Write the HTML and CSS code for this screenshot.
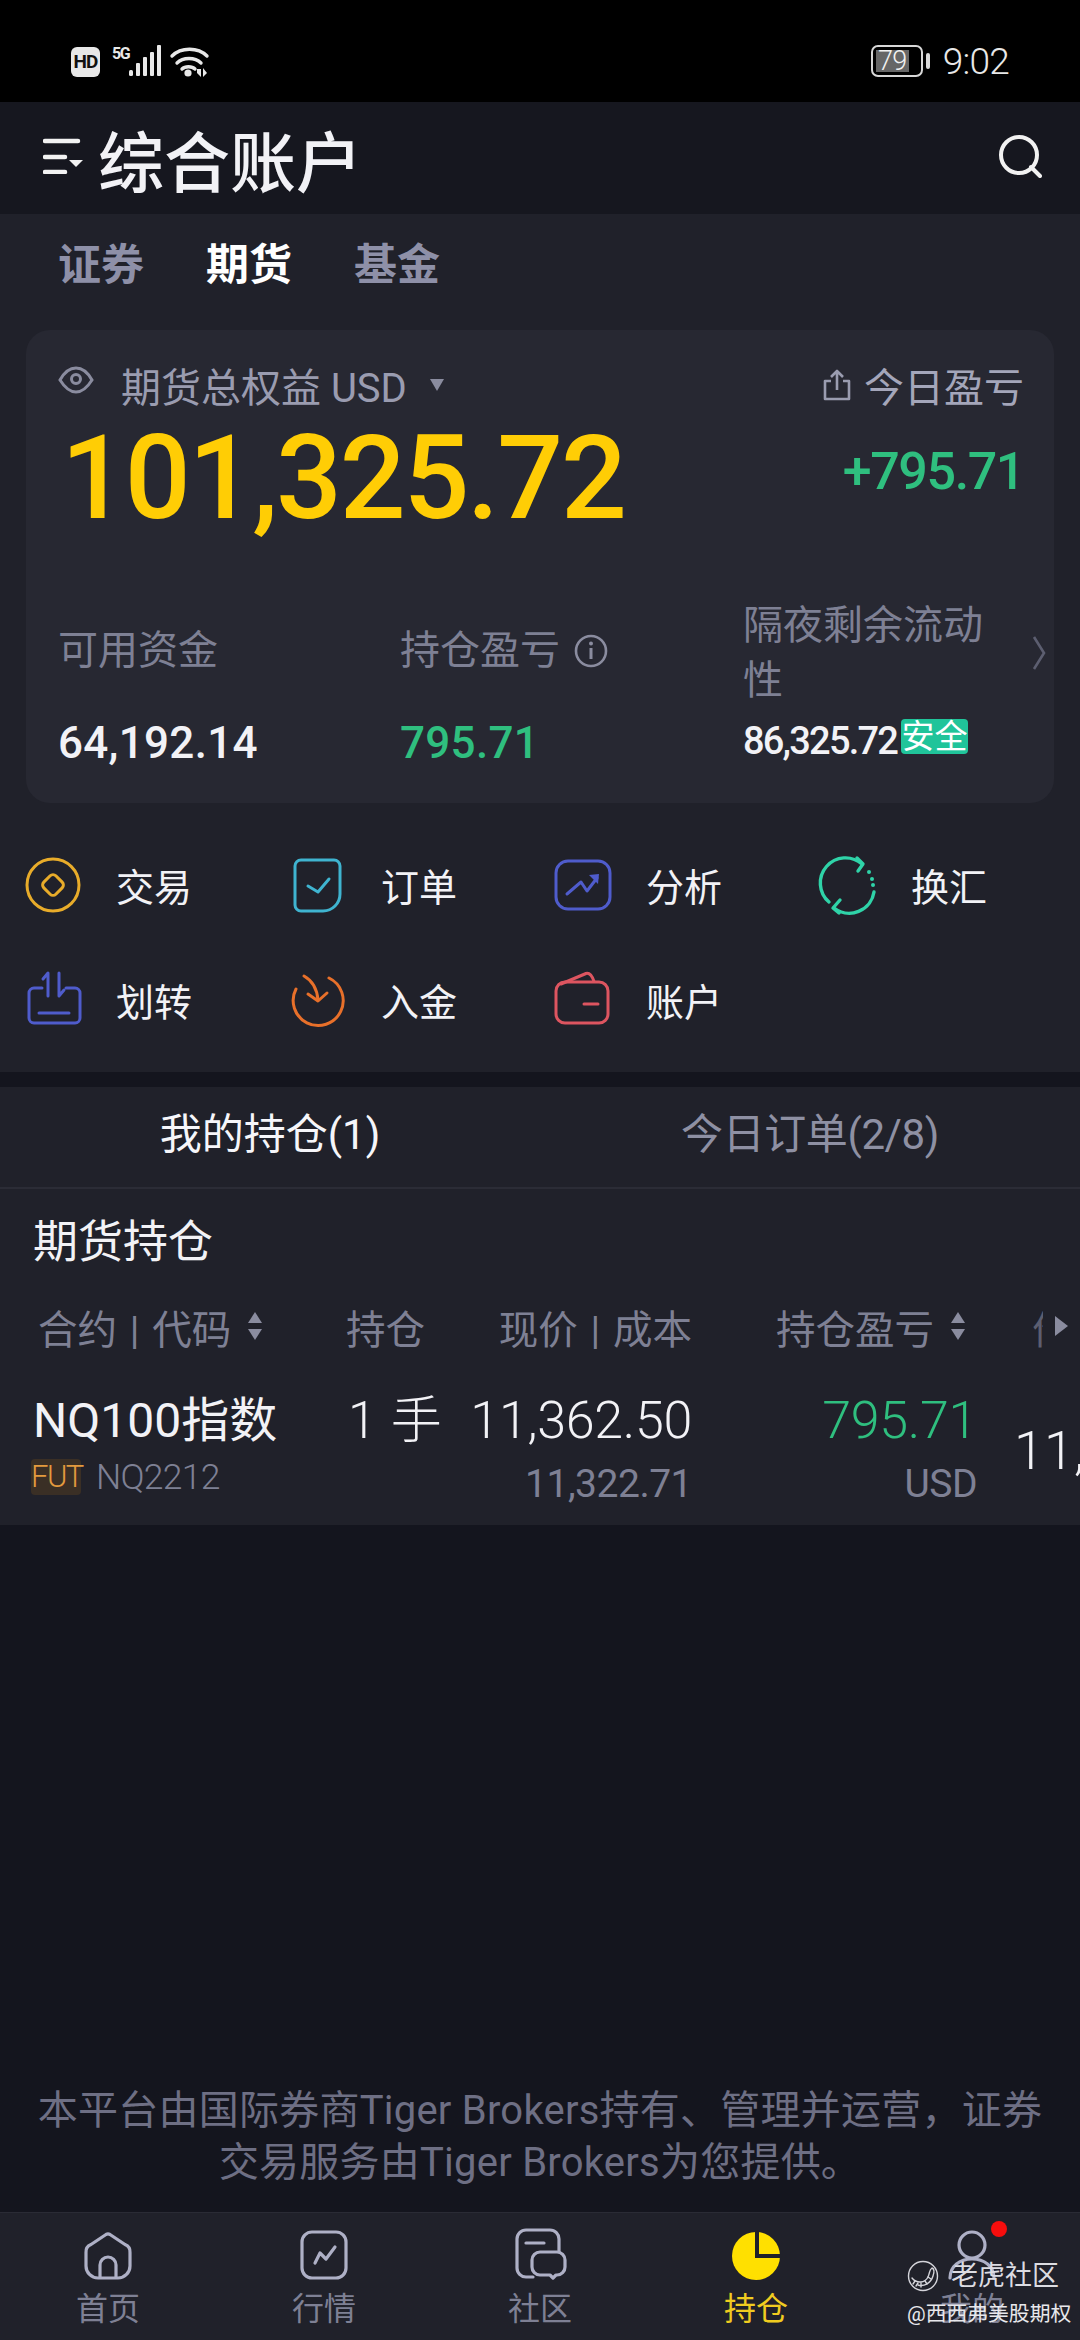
FILE: index.html
```html
<!DOCTYPE html>
<html lang="zh">
  <head>
    <title>综合账户</title>
    <meta name="viewport" content="width=device-width, initial-scale=1.0" />
    <link rel="stylesheet" href="styles.css">
  </head>
  <body>
    <div class="status-bar">
      <span class="hd-badge">HD</span>
      <span class="net-label">5G</span>
      <svg class="net-icons" width="84" height="34" viewBox="127 44 84 34">
        <g fill="#e8e8e8">
          <rect x="129" y="70" width="4" height="6" rx="1.5"/>
          <rect x="136" y="63" width="4" height="13" rx="1"/>
          <rect x="143" y="57" width="4" height="19" rx="1"/>
          <rect x="150" y="52" width="4" height="24" rx="1"/>
          <rect x="157" y="45" width="4" height="31" rx="1"/>
          <circle cx="188" cy="73" r="3.6"/>
          <path d="M197 69l4-0v8l-4-4zM203 68l4 5-4 4z"/>
        </g>
        <g fill="none" stroke="#e8e8e8" stroke-width="3.4" stroke-linecap="round">
          <path d="M172 56c9-9 26-9 35 0"/>
          <path d="M177 63c6-6 18-6 24 0"/>
          <path d="M182 69c3-3 10-3 13 0"/>
        </g>
      </svg>
      <div class="status-right">
        <div class="battery"><span class="battery-level">79</span></div>
        <span class="battery-cap"></span>
        <span class="clock">9:02</span>
      </div>
    </div>

    <header class="app-header">
      <svg class="menu-icon" width="42" height="36" viewBox="0 0 42 36">
        <path d="M2 3h33M2 19h20M2 34h20" stroke="#f2f2f2" stroke-width="4.5" stroke-linecap="round" fill="none"/>
        <path d="M26 22h14l-7 7z" fill="#f2f2f2"/>
      </svg>
      <h1 class="app-title">综合账户</h1>
      <svg class="search-icon" width="44" height="44" viewBox="0 0 44 44">
        <circle cx="21" cy="21" r="18" fill="none" stroke="#f2f2f2" stroke-width="4"/>
        <path d="M33 33l9 9" stroke="#f2f2f2" stroke-width="4" stroke-linecap="round"/>
      </svg>
    </header>

    <section class="overview">
      <nav class="asset-tabs">
        <span>证券</span>
        <span class="active">期货</span>
        <span>基金</span>
      </nav>

      <div class="card">
        <div class="card-top">
          <div>
            <div class="equity-label">
              <svg class="eye-icon" width="36" height="28" viewBox="0 0 36 28">
                <path d="M2 14C7 5 12 2 18 2s11 3 16 12c-5 8-10 12-16 12S7 22 2 14z" fill="none" stroke="#8a8c9f" stroke-width="3"/>
                <circle cx="18" cy="13" r="4.5" fill="none" stroke="#8a8c9f" stroke-width="3"/>
              </svg>
              <span>期货总权益 USD</span>
              <span class="caret"></span>
            </div>
            <div class="equity-value">101,325.72</div>
          </div>
          <div class="pnl-today">
            <div class="pnl-label">
              <svg width="30" height="32" viewBox="0 0 30 32">
                <path d="M9 12H3v18h24V12h-6M15 21V3M9 8l6-6 6 6" fill="none" stroke="#9a9cb0" stroke-width="2.6" stroke-linejoin="round"/>
              </svg>
              <span>今日盈亏</span>
            </div>
            <div class="pnl-value">+795.71</div>
          </div>
        </div>

        <div class="stats">
          <div class="stat-label stat-short">可用资金</div>
          <div class="stat-label stat-short">持仓盈亏
            <svg class="info-icon" width="34" height="34" viewBox="0 0 34 34">
              <circle cx="17" cy="17" r="15" fill="none" stroke="#8a8c9f" stroke-width="2.6"/>
              <path d="M17 14v11" stroke="#8a8c9f" stroke-width="3"/>
              <circle cx="17" cy="9.5" r="2" fill="#8a8c9f"/>
            </svg>
          </div>
          <div class="stat-label stat-wrap">
            <span class="stat-long">隔夜剩余流动性</span>
            <svg width="14" height="36" viewBox="0 0 14 36">
              <path d="M2 2l10 16L2 34" fill="none" stroke="#5c5e70" stroke-width="2.6"/>
            </svg>
          </div>
          <div class="stat-value">64,192.14</div>
          <div class="stat-value green">795.71</div>
          <div class="stat-value stat-small">86,325.72<span class="safe-badge">安全</span></div>
        </div>
      </div>

      <div class="actions">
        <div class="action">
          <svg viewBox="0 0 56 56"><g fill="none" stroke="#e8ac2a" stroke-width="3">
            <circle cx="27" cy="28" r="26"/>
            <rect x="18.5" y="19.5" width="17" height="17" rx="4" transform="rotate(45 27 28)"/>
          </g></svg>
          <span>交易</span>
        </div>
        <div class="action">
          <svg viewBox="0 0 56 56"><g fill="none" stroke="#3fb4d0" stroke-width="3" stroke-linecap="round" stroke-linejoin="round">
            <path d="M10 3h33a6 6 0 0 1 6 6v28a17 17 0 0 1-17 17H10a6 6 0 0 1-6-6V9a6 6 0 0 1 6-6z"/>
            <path d="M17 29l10 6 11-13"/>
          </g></svg>
          <span>订单</span>
        </div>
        <div class="action">
          <svg viewBox="0 0 56 56"><g fill="none" stroke="#4f5ccc" stroke-width="3" stroke-linecap="round" stroke-linejoin="round">
            <rect x="0" y="4" width="54" height="48" rx="12"/>
            <path d="M11 37l14-12 6 9 10-13"/>
          </g><path d="M33 18l10-1-1 10z" fill="#4f5ccc"/></svg>
          <span>分析</span>
        </div>
        <div class="action">
          <svg viewBox="0 0 56 56"><g fill="none" stroke="#2fd3a8" stroke-width="3.4" stroke-linecap="round" stroke-linejoin="round">
            <path d="M8 45A25 25 0 0 1 41 7"/>
            <path d="M36 1l6 6-5 7"/>
            <path d="M53 35A25 25 0 0 1 13 51"/>
            <path d="M19 43l-7 8 6 5"/>
          </g><g fill="#2fd3a8"><circle cx="48" cy="15" r="2"/><circle cx="51" cy="22" r="2"/><circle cx="52" cy="28" r="2"/></g></svg>
          <span>换汇</span>
        </div>
        <div class="action">
          <svg viewBox="0 0 56 56"><g fill="none" stroke="#4f5ccc" stroke-width="3" stroke-linecap="round" stroke-linejoin="round">
            <path d="M16 16H8a5 5 0 0 0-5 5v25a5 5 0 0 0 5 5h41a5 5 0 0 0 5-5V21a5 5 0 0 0-5-5h-9"/>
            <path d="M13 41h30"/>
            <path d="M22 24V1l-5 6"/>
            <path d="M33 1v23l5-6"/>
          </g></svg>
          <span>划转</span>
        </div>
        <div class="action">
          <svg viewBox="0 0 56 56"><g fill="none" stroke="#e8702a" stroke-width="3" stroke-linecap="round" stroke-linejoin="round">
            <path d="M38 6A25 25 0 1 1 5 17"/>
            <path d="M13 4c9 5 13 13 14 24"/>
            <path d="M17 22l10 7 9-8"/>
          </g></svg>
          <span>入金</span>
        </div>
        <div class="action">
          <svg viewBox="0 0 56 56"><g fill="none" stroke="#dd5560" stroke-width="3" stroke-linecap="round" stroke-linejoin="round">
            <rect x="0" y="10" width="52" height="41" rx="9"/>
            <path d="M5 12L30 1.500c4-1 6 2 8 8"/>
            <path d="M28 32h14"/>
          </g></svg>
          <span>账户</span>
        </div>
      </div>
    </section>

    <section class="holdings">
      <div class="list-tabs">
        <span class="active">我的持仓(1)</span>
        <span class="orders">今日订单(2/8)</span>
      </div>
      <h2 class="holdings-title">期货持仓</h2>

      <div class="table">
        <div class="th first">合约 | 代码<span class="sort"></span></div>
        <div class="th qty">持仓</div>
        <div class="th num">现价 | 成本</div>
        <div class="th num pnl">持仓盈亏<span class="sort"></span></div>
        <div class="th more"><span class="cut">价值</span><span class="more-arrow"></span></div>

        <div class="td">
          <div class="line-main">NQ100指数</div>
          <div class="line-code"><span class="fut-badge">FUT</span><span class="code">NQ2212</span></div>
        </div>
        <div class="td qty-cell">
          <div class="line-main">1 <span class="hand">手</span></div>
        </div>
        <div class="td num">
          <div class="line-main">11,362.50</div>
          <div class="line-sub">11,322.71</div>
        </div>
        <div class="td num pnl-cell">
          <div class="line-main green">795.71</div>
          <div class="line-sub">USD</div>
        </div>
        <div class="td cut-cell">11,480.00</div>
      </div>
    </section>

    <main class="notice-area">
      <p class="notice">本平台由国际券商Tiger Brokers持有、管理并运营，证券<br>交易服务由Tiger Brokers为您提供。</p>
    </main>

    <nav class="tab-bar">
      <div class="tab">
        <svg viewBox="0 0 48 48"><g fill="none" stroke="#aeb0c6" stroke-width="3.2" stroke-linejoin="round">
          <path d="M22 2.500a4 4 0 0 1 4 0l15 10a8 8 0 0 1 5 8V34a12 12 0 0 1-12 12H14A12 12 0 0 1 2 34V20.500a8 8 0 0 1 5-8z"/>
          <path d="M16 46V33a8 8 0 0 1 16 0v13"/>
        </g></svg>
        <span>首页</span>
      </div>
      <div class="tab">
        <svg viewBox="0 0 48 48"><g fill="none" stroke="#aeb0c6" stroke-width="3.2" stroke-linecap="round" stroke-linejoin="round">
          <rect x="2" y="0" width="44" height="46" rx="10"/>
          <path d="M15 31l5-10 6 6 9-12"/>
        </g></svg>
        <span>行情</span>
      </div>
      <div class="tab">
        <svg viewBox="0 0 48 48"><g fill="none" stroke="#aeb0c6" stroke-width="3.200" stroke-linecap="round" stroke-linejoin="round">
          <path d="M17 45H10a9 9 0 0 1-9-9V7a9 9 0 0 1 9-9h24a9 9 0 0 1 9 9v13"/>
          <path d="M10 11h18"/>
          <path d="M24 20h17a8 8 0 0 1 8 8v7a8 8 0 0 1-8 8h-1l-3 3-3-3h-10a8 8 0 0 1-8-8v-7a8 8 0 0 1 8-8z" fill="#20212a"/>
        </g></svg>
        <span>社区</span>
      </div>
      <div class="tab active">
        <svg viewBox="0 0 48 48">
          <circle cx="24" cy="24" r="24" fill="#ffe000"/>
          <path d="M25 0v24h24" fill="none" stroke="#20212a" stroke-width="4"/>
        </svg>
        <span>持仓</span>
      </div>
      <div class="tab">
        <svg viewBox="0 0 48 48"><g fill="none" stroke="#aeb0c6" stroke-width="3.2" stroke-linecap="round">
          <circle cx="24" cy="13" r="13"/>
          <path d="M2 46c0-12 10-19 22-19s22 7 22 19"/>
        </g></svg>
        <span>我的</span>
        <i class="red-dot"></i>
      </div>
    </nav>

    <div class="watermark">
      <div class="wm-top">
        <svg width="32" height="32" viewBox="0 0 32 32">
          <g fill="none" stroke="#d4d4da" stroke-width="1.4" stroke-linecap="round">
            <circle cx="16" cy="16" r="14.500"/>
            <path d="M5 18c5 6 13 5 16-1 2-4 1-7 4-9 3 1 2 5 1 8-2 7-9 11-15 9"/>
            <path d="M8 21l-2 3M11 23l-2 3M14 23l0 4M18 21l2 3M21 17l3 2"/>
          </g>
        </svg>
        <span>老虎社区</span>
      </div>
      <div class="wm-bottom">@西西弗美股期权</div>
    </div>
  </body>
</html>
```

FILE: styles.css
```css
/* Dark trading app screen */
* {
  box-sizing: border-box;
}

body {
  position: relative;
  width: 1080px;
  height: 2340px;
  margin: 0;
  overflow: hidden;
  display: flex;
  flex-direction: column;
  background-color: #14151e;
  color: #f2f2f6;
  font-family: Roboto, "Noto Sans CJK SC", sans-serif;
}

h1,
h2,
p {
  margin: 0;
  font-weight: normal;
}

.green {
  color: #2fbf7f;
}

/* Status bar */
.status-bar {
  height: 102px;
  flex: none;
  display: flex;
  align-items: flex-start;
  padding: 44px 71px 0 71px;
  background-color: #000;
}

.hd-badge {
  width: 29px;
  height: 30px;
  margin-top: 3px;
  border-radius: 6px;
  background-color: #e8e8e8;
  color: #111;
  font-size: 19px;
  font-weight: 700;
  line-height: 30px;
  text-align: center;
  letter-spacing: -1px;
}

.net-label {
  width: 16px;
  margin-left: 12px;
  color: #e8e8e8;
  font-size: 16px;
  font-weight: 700;
  line-height: 20px;
  letter-spacing: -1.5px;
}

.net-icons {
  margin-left: -1px;
}

.status-right {
  margin-left: auto;
  display: flex;
  align-items: center;
  height: 34px;
}

.battery {
  width: 52px;
  height: 32px;
  padding: 3px;
  border: 2px solid #d8d8d8;
  border-radius: 7px;
}

.battery-level {
  display: block;
  width: 33px;
  height: 22px;
  background-color: #666;
  color: #f2f2f2;
  font-size: 27px;
  font-weight: 300;
  line-height: 22px;
  text-align: center;
  letter-spacing: -0.5px;
}

.battery-cap {
  width: 4px;
  height: 16px;
  margin-left: 3px;
  border-radius: 2px;
  background-color: #d8d8d8;
}

.clock {
  margin-left: 13px;
  color: #e8e8e8;
  font-size: 37px;
  font-weight: 300;
  letter-spacing: -0.8px;
}

/* Header */
.app-header {
  height: 112px;
  flex: none;
  display: flex;
  align-items: center;
  padding: 0 38px 0 43px;
  background-color: #16171f;
}

.menu-icon {
  margin-top: -4px;
}

.app-title {
  margin-left: 13px;
  margin-top: 13px;
  font-size: 66px;
  font-weight: 500;
  line-height: 80px;
}

.search-icon {
  margin-left: auto;
  margin-top: -4px;
}

/* Overview */
.overview {
  height: 858px;
  flex: none;
  background-color: #20212a;
}

.asset-tabs {
  display: flex;
  gap: 62px;
  height: 116px;
  padding: 22px 0 0 58px;
  color: #8e90a8;
  font-size: 43px;
  font-weight: 700;
  line-height: 58px;
}

.asset-tabs .active {
  color: #fff;
}

.card {
  height: 473px;
  margin: 0 26px;
  padding: 0 8px 0 32px;
  border-radius: 24px;
  background-color: #272832;
}

.card-top {
  display: flex;
  justify-content: space-between;
  padding-right: 22px;
}

.equity-label {
  display: flex;
  align-items: center;
  height: 50px;
  margin-top: 30px;
  color: #9a9cb0;
  font-size: 40px;
}

.eye-icon {
  margin-right: 27px;
  margin-top: -10px;
}

.caret {
  width: 0;
  height: 0;
  margin-left: 23px;
  border-top: 12px solid #8a8c9f;
  border-left: 7px solid transparent;
  border-right: 7px solid transparent;
}

.equity-value {
  height: 120px;
  margin: 8px 0 0 3px;
  color: #ffcd05;
  font-size: 116px;
  font-weight: 500;
  line-height: 120px;
  letter-spacing: -2.2px;
}

.pnl-today {
  text-align: right;
}

.pnl-label {
  display: flex;
  align-items: center;
  justify-content: flex-end;
  gap: 12px;
  height: 50px;
  margin-top: 30px;
  color: #a4a6ba;
  font-size: 40px;
}

.pnl-value {
  margin-top: 32px;
  color: #2fbf7f;
  font-size: 52px;
  font-weight: 500;
  line-height: 60px;
  letter-spacing: -1.400px;
}

.stats {
  display: grid;
  grid-template-columns: 342px 343px 1fr;
  grid-template-rows: 110px 60px;
  margin-top: 60px;
  margin-bottom: 0;
}

.stat-label {
  display: flex;
  align-items: center;
  color: #7e8094;
  font-size: 40px;
  line-height: 55px;
}

.stat-short {
  padding-bottom: 5px;
}

.info-icon {
  margin-left: 14px;
}

.stat-wrap {
  justify-content: space-between;
}

.stat-long {
  width: 250px;
}

.stat-value {
  margin-top: 5px;
  font-size: 44px;
  font-weight: 500;
  line-height: 60px;
  letter-spacing: 0.3px;
}

.stat-small {
  display: flex;
  align-items: center;
  font-size: 38px;
  letter-spacing: -1.800px;
  margin-top: 5px;
}

.safe-badge {
  width: 67px;
  height: 35px;
  margin-left: 4px;
  margin-top: -8px;
  border-radius: 4px;
  background-color: #20c49a;
  color: #fff;
  font-size: 33px;
  font-weight: 400;
  line-height: 35px;
  text-align: center;
  letter-spacing: 0;
}

/* Quick actions */
.actions {
  display: grid;
  grid-template-columns: repeat(4, 265px);
  grid-auto-rows: 115px;
  padding: 24px 0 0 26px;
}

.action {
  display: flex;
  align-items: center;
  gap: 34px;
  font-size: 38px;
}

.action svg {
  width: 56px;
  height: 56px;
  overflow: visible;
}

/* Holdings */
.holdings {
  height: 438px;
  flex: none;
  margin-top: 15px;
  overflow: hidden;
  background-color: #20212a;
}

.list-tabs {
  display: grid;
  grid-template-columns: 1fr 1fr;
  height: 102px;
  border-bottom: 2px solid #2b2c36;
  color: #8e90a3;
  font-size: 42px;
  line-height: 95px;
  text-align: center;
}

.list-tabs .active {
  color: #f6f6fa;
}

.list-tabs .orders {
  letter-spacing: -0.4px;
}

.holdings-title {
  height: 60px;
  margin: 24px 0 0 33px;
  font-size: 45px;
  line-height: 60px;
}

.table {
  display: grid;
  grid-template-columns: 300px 107px 252px 285px 136px;
  grid-template-rows: 60px auto;
  row-gap: 35px;
  margin-top: 23px;
  padding-left: 33px;
  width: 1200px;
}

.th {
  display: flex;
  align-items: center;
  color: #7e8094;
  font-size: 39.500px;
  white-space: pre;
  word-spacing: 3px;
}

.th.first {
  padding-left: 5px;
}

.th.qty {
  padding-left: 13px;
}

.th.num {
  justify-content: flex-end;
}

.th.pnl {
  padding-right: 12px;
}

.th.more {
  padding-left: 55px;
}

.sort {
  position: relative;
  width: 14px;
  height: 28px;
  margin-left: 17px;
}

.sort::before,
.sort::after {
  content: "";
  position: absolute;
  left: 0;
  border-left: 7px solid transparent;
  border-right: 7px solid transparent;
}

.sort::before {
  top: 0;
  border-bottom: 11px solid #8a8c9f;
}

.sort::after {
  bottom: 0;
  border-top: 11px solid #8a8c9f;
}

.cut {
  width: 11px;
  overflow: hidden;
  color: #5c5e70;
}

.more-arrow {
  width: 0;
  height: 0;
  margin-left: 12px;
  border-left: 13px solid #8a8c9f;
  border-top: 10px solid transparent;
  border-bottom: 10px solid transparent;
}

.td {
  display: flex;
  flex-direction: column;
  white-space: nowrap;
}

.td.num {
  align-items: flex-end;
  text-align: right;
}

.line-main {
  height: 60px;
  font-size: 48px;
  line-height: 60px;
  letter-spacing: 0;
}

.line-sub {
  height: 60px;
  margin-top: 3px;
  color: #7e8094;
  font-size: 39px;
  line-height: 60px;
  letter-spacing: -0.500px;
}

.td.num .line-main {
  font-size: 52px;
  font-weight: 300;
  letter-spacing: -0.3px;
}

.line-code {
  display: flex;
  align-items: center;
  height: 46px;
  margin-top: 3px;
}

.fut-badge {
  width: 50px;
  height: 36px;
  margin-left: -2px;
  border-radius: 4px;
  background-color: #3a2f25;
  color: #e39a3e;
  font-size: 31px;
  font-weight: 300;
  line-height: 36px;
  text-align: center;
  letter-spacing: -1.500px;
}

.code {
  margin-left: 15px;
  color: #7e8094;
  font-size: 35.500px;
  font-weight: 300;
  letter-spacing: -0.700px;
}

.qty-cell {
  padding-left: 15px;
}

.qty-cell .line-main {
  font-size: 51px;
  font-weight: 300;
  letter-spacing: 0;
}

.hand {
  margin-left: 2px;
}

.cut-cell {
  padding: 30px 0 0 37px;
  font-size: 54px;
  font-weight: 300;
  line-height: 60px;
}

/* Notice */
.notice-area {
  flex: 1;
  display: flex;
  flex-direction: column;
  justify-content: flex-end;
  min-height: 0;
}

.notice {
  padding-bottom: 23px;
  color: #6e6f84;
  font-size: 40px;
  line-height: 52px;
  letter-spacing: 0.23px;
  text-align: center;
}

/* Bottom tab bar */
.tab-bar {
  height: 128px;
  flex: none;
  display: grid;
  grid-template-columns: repeat(5, 1fr);
  padding-top: 19px;
  border-top: 1px solid #2a2b35;
  background-color: #20212a;
}

.tab {
  position: relative;
  display: flex;
  flex-direction: column;
  align-items: center;
  color: #7e8094;
  font-size: 32px;
  line-height: 44px;
}

.tab svg {
  width: 48px;
  height: 48px;
  overflow: visible;
  margin-bottom: 7px;
}

.tab.active {
  color: #f0cc20;
}

.red-dot {
  position: absolute;
  top: -11px;
  left: 127px;
  width: 16px;
  height: 16px;
  border-radius: 50%;
  background-color: #f60d0d;
}

/* Repost watermark over the tab bar */
.watermark {
  position: absolute;
  right: 21px;
  bottom: 13px;
  width: 152px;
  color: #e8e8ec;
}

.wm-top {
  display: flex;
  align-items: center;
  justify-content: space-between;
  font-size: 27px;
  line-height: 34px;
  color: #dcdce2;
}

.wm-bottom {
  margin-top: 8px;
  font-size: 20.800px;
  line-height: 26px;
  white-space: nowrap;
}
```
